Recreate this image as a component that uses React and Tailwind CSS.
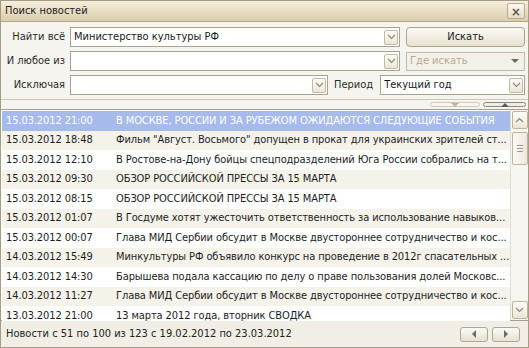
import React from 'react';

// News search dialog: filter form on top, results list, pager in the footer.

const rows = [
  ['15.03.2012 21:00', 'В МОСКВЕ, РОССИИ И ЗА РУБЕЖОМ ОЖИДАЮТСЯ СЛЕДУЮЩИЕ СОБЫТИЯ'],
  ['15.03.2012 18:48', 'Фильм "Август. Восьмого" допущен в прокат для украинских зрителей ст...'],
  ['15.03.2012 12:10', 'В Ростове-на-Дону бойцы спецподразделений Юга России собрались на т...'],
  ['15.03.2012 09:30', 'ОБЗОР РОССИЙСКОЙ ПРЕССЫ ЗА 15 МАРТА'],
  ['15.03.2012 08:15', 'ОБЗОР РОССИЙСКОЙ ПРЕССЫ ЗА 15 МАРТА'],
  ['15.03.2012 01:07', 'В Госдуме хотят ужесточить ответственность за использование навыков...'],
  ['15.03.2012 00:07', 'Глава МИД Сербии обсудит в Москве двустороннее сотрудничество и кос...'],
  ['14.03.2012 15:49', 'Минкультуры РФ объявило конкурс на проведение в 2012г спасательных ...'],
  ['14.03.2012 14:30', 'Барышева подала кассацию по делу о праве пользования долей Московс...'],
  ['14.03.2012 11:27', 'Глава МИД Сербии обсудит в Москве двустороннее сотрудничество и кос...'],
  ['13.03.2012 21:00', '13 марта 2012 года, вторник СВОДКА'],
];

const font = "font-['DejaVu_Sans_Condensed','Liberation_Sans',sans-serif]";

function Chevron({ className = '' }) {
  return (
    <svg width="9" height="6" viewBox="0 0 9 6" className={className}>
      <path d="M1 1 L4.5 4.5 L8 1" fill="none" stroke="#8a8577" strokeWidth="1.1" />
    </svg>
  );
}

function DropBtn() {
  return (
    <div className="w-[14px] h-[15px] my-auto mr-[1px] rounded-[2px] border border-[#c4bba4] bg-gradient-to-b from-[#fbfaf6] to-[#ebe6d8] flex items-center justify-center">
      <Chevron />
    </div>
  );
}

function Combo({ value = '', className = '' }) {
  return (
    <div className={`h-[20px] flex items-stretch border border-[#aaa391] bg-white ${className}`}>
      <div className="flex-1 min-w-0 px-[3px] flex items-center text-[11px] text-[#1a1a1a] whitespace-nowrap overflow-hidden">
        {value}
      </div>
      <DropBtn />
    </div>
  );
}

function Label({ children }) {
  return (
    <div className="w-[64px] shrink-0 text-right text-[11px] text-[#2b2b2b] leading-[20px]">
      {children}
    </div>
  );
}

function Tri({ dir }) {
  const d = {
    up: 'M0 4 L4 0 L8 4 Z',
    down: 'M0 0 L8 0 L4 4 Z',
    left: 'M4 0 L4 8 L0 4 Z',
    right: 'M0 0 L4 4 L0 8 Z',
  }[dir];
  const horiz = dir === 'left' || dir === 'right';
  return (
    <svg width={horiz ? 4 : 8} height={horiz ? 8 : 4} viewBox={horiz ? '0 0 4 8' : '0 0 8 4'}>
      <path d={d} fill="#6f6a5e" />
    </svg>
  );
}

export default function App() {
  return (
    <div className={`w-[529px] h-[348px] bg-[#f6f4ee] border border-[#a59c84] flex flex-col overflow-hidden ${font}`}>
      {/* Title bar */}
      <div className="h-[21px] shrink-0 flex items-center justify-between pl-[4px] pr-[3px] bg-gradient-to-b from-[#f6efdd] to-[#dbcdab] border-b border-[#b3a686]">
        <span className="text-[11px] text-[#222]">Поиск новостей</span>
        <div className="w-[18px] h-[16px] rounded-[2px] border border-[#b8ac90] bg-gradient-to-b from-[#fbf8ef] to-[#e6dcc4] flex items-center justify-center text-[#555] text-[13px] font-bold leading-none">
          ×
        </div>
      </div>

      {/* Filter form */}
      <div className="shrink-0 flex flex-col gap-[4px] pt-[5px] pb-[4px] pr-[3px] border-b border-[#cfc7b2]">
        <div className="flex items-center gap-[5px]">
          <Label>Найти всё</Label>
          <Combo value="Министерство культуры РФ" className="w-[330px]" />
          <div className="ml-[1px] flex-1 h-[20px] rounded-[4px] border border-[#ada389] bg-gradient-to-b from-[#fcfaf5] to-[#e7e1d0] flex items-center justify-center text-[11px] text-[#1a1a1a]">
            Искать
          </div>
        </div>
        <div className="flex items-center gap-[5px]">
          <Label>И любое из</Label>
          <Combo className="w-[330px]" />
          <div className="ml-[1px] flex-1 h-[19px] border border-[#c3bba7] bg-[#f3f0e8] flex items-center justify-between pl-[3px] pr-[5px] text-[11px] text-[#b2ab98]">
            <span>Где искать</span>
            <Tri dir="down" />
          </div>
        </div>
        <div className="flex items-center gap-[5px]">
          <Label>Исключая</Label>
          <Combo className="w-[258px]" />
          <span className="ml-[1px] text-[11px] text-[#2b2b2b]">Период</span>
          <Combo value="Текущий год" className="flex-1 ml-[2px]" />
        </div>
      </div>

      {/* Splitter tabs */}
      <div className="h-[9px] shrink-0 flex justify-end items-center gap-[3px] pr-[2px]">
        <div className="w-[50px] h-[5px] rounded-[3px] border border-[#cfc8b6] bg-[#f7f5f0] flex items-center justify-center">
          <svg width="8" height="4" viewBox="0 0 8 4"><path d="M0 0 L8 0 L4 4 Z" fill="#b9b3a5" /></svg>
        </div>
        <div className="w-[43px] h-[5px] rounded-[3px] border border-[#8f887a] bg-[#f0ede5] flex items-center justify-center">
          <svg width="8" height="4" viewBox="0 0 8 4"><path d="M0 4 L4 0 L8 4 Z" fill="#5f5a50" /></svg>
        </div>
      </div>

      {/* Result list */}
      <div className="flex-1 min-h-0 border-y border-[#a6a08f] bg-white flex">
        <div className="flex-1 min-w-0 flex flex-col pt-[1px] pl-[1px]">
          {rows.map(([date, text], i) => {
            const sel = i === 0;
            const bg = sel ? 'bg-[#a6baec] text-white' : i % 2 === 1 ? 'bg-[#f5f2ea] text-[#1d1d1d]' : 'bg-white text-[#1d1d1d]';
            return (
              <div key={i} className={`h-[19.5px] shrink-0 flex items-center text-[11px] tracking-[-0.1px] ${bg}`}>
                <div className="w-[114px] shrink-0 pl-[4px] whitespace-nowrap">{date}</div>
                <div className="flex-1 min-w-0 pr-[2px] whitespace-nowrap overflow-hidden">{text}</div>
              </div>
            );
          })}
        </div>
        {/* Scrollbar */}
        <div className="w-[18px] shrink-0 bg-[#f7f5f0] border-l border-[#e2ddd0] flex flex-col items-center py-[1px]">
          <div className="w-[16px] h-[18px] rounded-[2px] border border-[#bdb49d] bg-gradient-to-b from-[#fdfcf8] to-[#ebe6d8] flex items-center justify-center">
            <Chevron className="rotate-180" />
          </div>
          <div className="mt-[3px] w-[16px] h-[33px] rounded-[2px] border border-[#bdb49d] bg-gradient-to-r from-[#fbfaf6] to-[#ece7da] flex flex-col items-center justify-center gap-[2px]">
            <div className="w-[6px] h-px bg-[#9c9687]" />
            <div className="w-[6px] h-px bg-[#9c9687]" />
            <div className="w-[6px] h-px bg-[#9c9687]" />
          </div>
          <div className="flex-1" />
          <div className="w-[16px] h-[18px] rounded-[2px] border border-[#bdb49d] bg-gradient-to-b from-[#fdfcf8] to-[#ebe6d8] flex items-center justify-center">
            <Chevron />
          </div>
        </div>
      </div>

      {/* Footer / pager */}
      <div className="h-[26px] shrink-0 bg-[#f1eee6] flex items-center justify-between pl-[5px] pr-[8px]">
        <span className="text-[11px] text-[#222]">Новости с 51 по 100 из 123 с 19.02.2012 по 23.03.2012</span>
        <div className="flex gap-[4px]">
          <div className="w-[28px] h-[15px] rounded-[3px] border border-[#b0a78f] bg-gradient-to-b from-[#fcfaf5] to-[#e6e0cf] flex items-center justify-center">
            <Tri dir="left" />
          </div>
          <div className="w-[28px] h-[15px] rounded-[3px] border border-[#b0a78f] bg-gradient-to-b from-[#fcfaf5] to-[#e6e0cf] flex items-center justify-center">
            <Tri dir="right" />
          </div>
        </div>
      </div>
    </div>
  );
}
